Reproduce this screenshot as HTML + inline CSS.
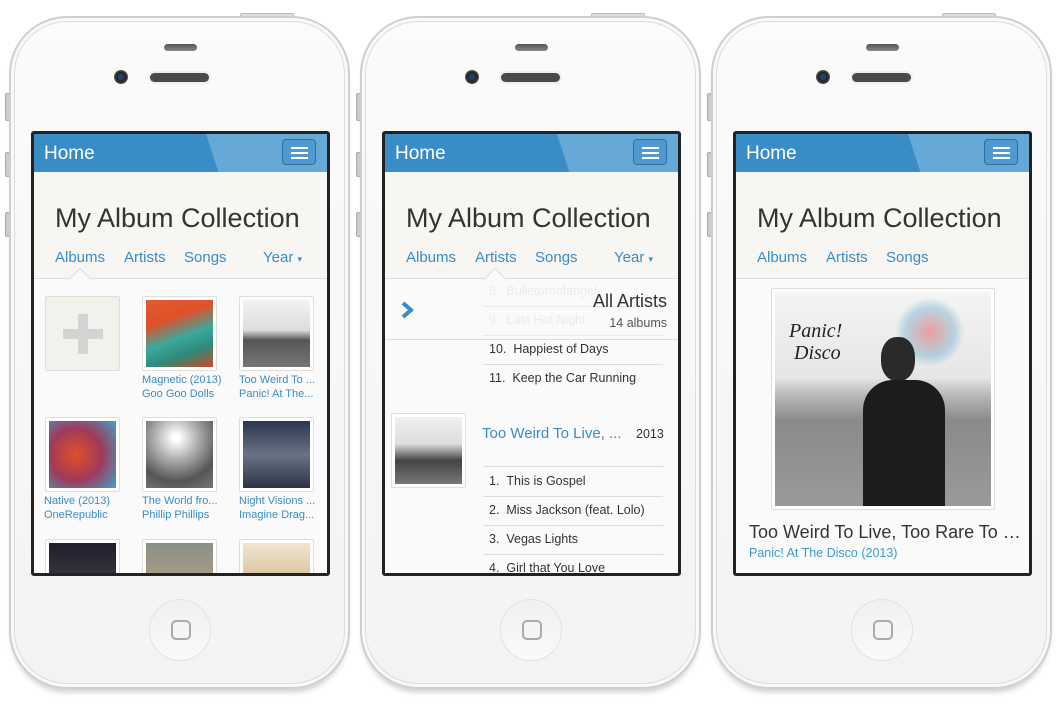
<!DOCTYPE html>
<html><head><meta charset="utf-8"><style>
*{margin:0;padding:0;box-sizing:border-box}
body{width:1061px;height:708px;background:#fff;position:relative;overflow:hidden;font-family:"Liberation Sans",Arial,sans-serif}
.ph{position:absolute;top:0;width:360px;height:708px}
.body{position:absolute;left:9px;top:16px;width:341px;height:673px;border-radius:58px;background:linear-gradient(#fbfbfb,#f3f3f3);border:2px solid #cfcfcf;box-shadow:inset 0 0 0 3px #f9f9f9,inset 0 0 0 4px #dcdcdc,0 6px 6px -3px #ccc}
.topbtn{position:absolute;left:240px;top:13px;width:54px;height:5px;background:#ddd;border-radius:2px 2px 0 0;border:1px solid #bbb}
.side{position:absolute;left:5px;width:5px;background:#ccc;border-radius:2px;border:1px solid #aaa}
.ear{position:absolute;left:164px;top:44px;width:33px;height:7px;border-radius:4px;background:linear-gradient(#555,#888)}
.cam{position:absolute;left:114px;top:70px;width:14px;height:14px;border-radius:50%;background:radial-gradient(circle at 50% 50%,#2a3f6a 20%,#222 45%,#555 70%,#ddd 80%)}
.spk{position:absolute;left:150px;top:73px;width:59px;height:9px;border-radius:5px;background:#4a4a4a;box-shadow:0 0 0 2px #eee}
.home{position:absolute;left:149px;top:599px;width:62px;height:62px;border-radius:50%;background:linear-gradient(#f0f0f0,#fafafa);border:1px solid #e2e2e2}
.home i{position:absolute;left:21px;top:20px;width:20px;height:20px;border:2px solid #aaa;border-radius:5px}
.scr{position:absolute;left:31px;top:131px;width:299px;height:445px;border:3px solid #222;border-radius:3px;overflow:hidden;background:#fafafa}
.nav{position:absolute;left:0;top:0;width:293px;height:38px;background:#3a8cc7}
.nav:after{content:"";position:absolute;left:172px;top:0;width:140px;height:38px;background:#66a9d6;transform:skewX(18deg);transform-origin:0 0}
.nav b{position:absolute;left:10px;top:9px;color:#fff;font-weight:normal;font-size:19px;z-index:2}
.menu{position:absolute;left:248px;top:5px;width:34px;height:26px;border:1px solid #2f6f9f;border-radius:4px;z-index:2;background:#4f9ad0}
.menu i{position:absolute;left:8px;width:17px;height:2px;background:#fff}
.hdr{position:absolute;left:0;top:38px;width:293px;height:107px;background:#f7f6f2;border-bottom:1px solid #ddd}
.title{position:absolute;left:21px;font-size:27px;color:#333;white-space:nowrap;line-height:32px}
.tab{position:absolute;font-size:15px;color:#3a8cc7;line-height:20px}
.notch{position:absolute;top:137px;width:16px;height:16px;background:#fafafa;border-left:1px solid #ddd;border-top:1px solid #ddd;transform:rotate(45deg)}
.cell{position:absolute;width:75px;height:75px;border:1px solid #e0ddd6;border-radius:2px;background:#fff;padding:3px}
.cell div{width:100%;height:100%}
.cap{position:absolute;font-size:11px;color:#3a8cc7;line-height:14px;white-space:nowrap}
.tr{position:absolute;left:98px;width:180px;font-size:12.5px;color:#333;line-height:29px;border-bottom:1px solid #ddd;padding-left:6px}
</style></head><body>

<div class="ph" style="left:0">
<div class="topbtn"></div><div class="side" style="top:93px;height:28px"></div><div class="side" style="top:152px;height:25px"></div><div class="side" style="top:212px;height:25px"></div>
<div class="body"></div><div class="ear"></div><div class="cam"></div><div class="spk"></div><div class="home"><i></i></div>
<div class="scr">
<div class="nav"><b>Home</b><div class="menu"><i style="top:7px"></i><i style="top:12px"></i><i style="top:17px"></i></div></div>
<div class="hdr"><div class="title" style="top:30px">My Album Collection</div>
<div class="tab" style="left:21px;top:76px">Albums</div><div class="tab" style="left:90px;top:76px">Artists</div><div class="tab" style="left:150px;top:76px">Songs</div><div class="tab" style="left:229px;top:76px">Year <span style="font-size:9px">▾</span></div></div>
<div class="notch" style="left:38px"></div>
<div class="cell" style="left:11px;top:162px;background:#f3f1ec"><div style="position:relative"><span style="position:absolute;left:29px;top:14px;width:10px;height:40px;background:#d3d3d3"></span><span style="position:absolute;left:14px;top:29px;width:40px;height:10px;background:#d3d3d3"></span></div></div>
<div class="cell" style="left:108px;top:162px"><div style="background:linear-gradient(160deg,#e45a2c 0%,#e0502a 30%,#3ba99a 55%,#2e8a7a 75%,#c94a2c 100%)"></div></div>
<div class="cell" style="left:205px;top:162px"><div style="background:linear-gradient(#f2f2f2 0%,#ddd 45%,#555 60%,#777 100%)"></div></div>
<div class="cap" style="left:108px;top:239px">Magnetic (2013)<br>Goo Goo Dolls</div>
<div class="cap" style="left:205px;top:239px">Too Weird To ...<br>Panic! At The...</div>
<div class="cell" style="left:11px;top:283px"><div style="background:radial-gradient(circle at 40% 50%,#e0502a,#a03a5a 50%,#3fa2c8 100%)"></div></div>
<div class="cell" style="left:108px;top:283px"><div style="background:radial-gradient(circle at 45% 25%,#fff 5%,#bbb 30%,#555 70%,#777)"></div></div>
<div class="cell" style="left:205px;top:283px"><div style="background:linear-gradient(#2a3550,#6a7384 50%,#2c3444)"></div></div>
<div class="cap" style="left:10px;top:360px">Native (2013)<br>OneRepublic</div>
<div class="cap" style="left:108px;top:360px">The World fro...<br>Phillip Phillips</div>
<div class="cap" style="left:205px;top:360px">Night Visions ...<br>Imagine Drag...</div>
<div class="cell" style="left:11px;top:405px"><div style="background:linear-gradient(#1f1f2a,#4a4a5a)"></div></div>
<div class="cell" style="left:108px;top:405px"><div style="background:linear-gradient(#8a8f86,#c7a885)"></div></div>
<div class="cell" style="left:205px;top:405px"><div style="background:linear-gradient(#f0e6d0,#c8a070)"></div></div>
</div></div>

<div class="ph" style="left:351px">
<div class="topbtn"></div><div class="side" style="top:93px;height:28px"></div><div class="side" style="top:152px;height:25px"></div><div class="side" style="top:212px;height:25px"></div>
<div class="body"></div><div class="ear"></div><div class="cam"></div><div class="spk"></div><div class="home"><i></i></div>
<div class="scr">
<div class="nav"><b>Home</b><div class="menu"><i style="top:7px"></i><i style="top:12px"></i><i style="top:17px"></i></div></div>
<div class="hdr"><div class="title" style="top:30px">My Album Collection</div>
<div class="tab" style="left:21px;top:76px">Albums</div><div class="tab" style="left:90px;top:76px">Artists</div><div class="tab" style="left:150px;top:76px">Songs</div><div class="tab" style="left:229px;top:76px">Year <span style="font-size:9px">▾</span></div></div>
<div class="notch" style="left:102px"></div>
<div class="tr" style="top:143px;color:#ddd">8.&nbsp;&nbsp;Bulletproofangel</div>
<div class="tr" style="top:172px;color:#ddd">9.&nbsp;&nbsp;Last Hot Night</div>
<div style="position:absolute;left:0;top:146px;width:293px;height:60px;background:rgba(250,250,250,.5);border-bottom:1px solid #ddd"></div>
<svg style="position:absolute;left:15px;top:167px" width="14" height="18"><path d="M3 2 L11 9 L3 16" stroke="#3a8cc7" stroke-width="4" fill="none"/></svg>
<div style="position:absolute;right:11px;top:157px;font-size:18px;color:#333">All Artists</div>
<div style="position:absolute;right:11px;top:182px;font-size:12.5px;color:#555">14 albums</div>
<div class="tr" style="top:201px">10.&nbsp;&nbsp;Happiest of Days</div>
<div class="tr" style="top:230px;border:none">11.&nbsp;&nbsp;Keep the Car Running</div>
<div class="cell" style="left:6px;top:279px"><div style="background:linear-gradient(#f0f0f0 0%,#ddd 40%,#444 65%,#777 100%)"></div></div>
<div style="position:absolute;left:97px;top:291px;font-size:15px;color:#3a8cc7">Too Weird To Live, ...</div>
<div style="position:absolute;left:251px;top:293px;font-size:12.5px;color:#333">2013</div>
<div style="position:absolute;left:98px;top:332px;width:180px;border-top:1px solid #ddd"></div>
<div class="tr" style="top:333px">1.&nbsp;&nbsp;This is Gospel</div>
<div class="tr" style="top:362px">2.&nbsp;&nbsp;Miss Jackson (feat. Lolo)</div>
<div class="tr" style="top:391px">3.&nbsp;&nbsp;Vegas Lights</div>
<div class="tr" style="top:420px">4.&nbsp;&nbsp;Girl that You Love</div>
</div></div>

<div class="ph" style="left:702px">
<div class="topbtn"></div><div class="side" style="top:93px;height:28px"></div><div class="side" style="top:152px;height:25px"></div><div class="side" style="top:212px;height:25px"></div>
<div class="body"></div><div class="ear"></div><div class="cam"></div><div class="spk"></div><div class="home"><i></i></div>
<div class="scr">
<div class="nav"><b>Home</b><div class="menu"><i style="top:7px"></i><i style="top:12px"></i><i style="top:17px"></i></div></div>
<div class="hdr"><div class="title" style="top:30px">My Album Collection</div>
<div class="tab" style="left:21px;top:76px">Albums</div><div class="tab" style="left:90px;top:76px">Artists</div><div class="tab" style="left:150px;top:76px">Songs</div></div>
<div class="cell" style="left:35px;top:154px;width:224px;height:222px"><div style="position:relative;overflow:hidden;background:linear-gradient(#f4f4f4 0%,#e6e6e6 40%,#b9b9b9 48%,#8a8a8a 60%,#9a9a9a 100%)">
<span style="position:absolute;left:14px;top:28px;font-family:'Liberation Serif',serif;font-style:italic;font-size:20px;color:#222;line-height:22px">Panic!<br>&nbsp;Disco</span>
<span style="position:absolute;left:120px;top:5px;width:70px;height:70px;border-radius:50%;background:radial-gradient(circle,rgba(230,80,80,.5),rgba(80,160,200,.35) 50%,transparent 70%)"></span>
<span style="position:absolute;left:106px;top:45px;width:34px;height:44px;border-radius:45%;background:#2a2a2a"></span>
<span style="position:absolute;left:88px;top:88px;width:82px;height:130px;border-radius:30px 30px 0 0;background:#1c1c1c"></span>
</div></div>
<div style="position:absolute;left:13px;top:388px;font-size:18px;color:#333;white-space:nowrap">Too Weird To Live, Too Rare To …</div>
<div style="position:absolute;left:13px;top:412px;font-size:12.5px;color:#3a9ad0">Panic! At The Disco (2013)</div>
</div></div>
</body></html>
